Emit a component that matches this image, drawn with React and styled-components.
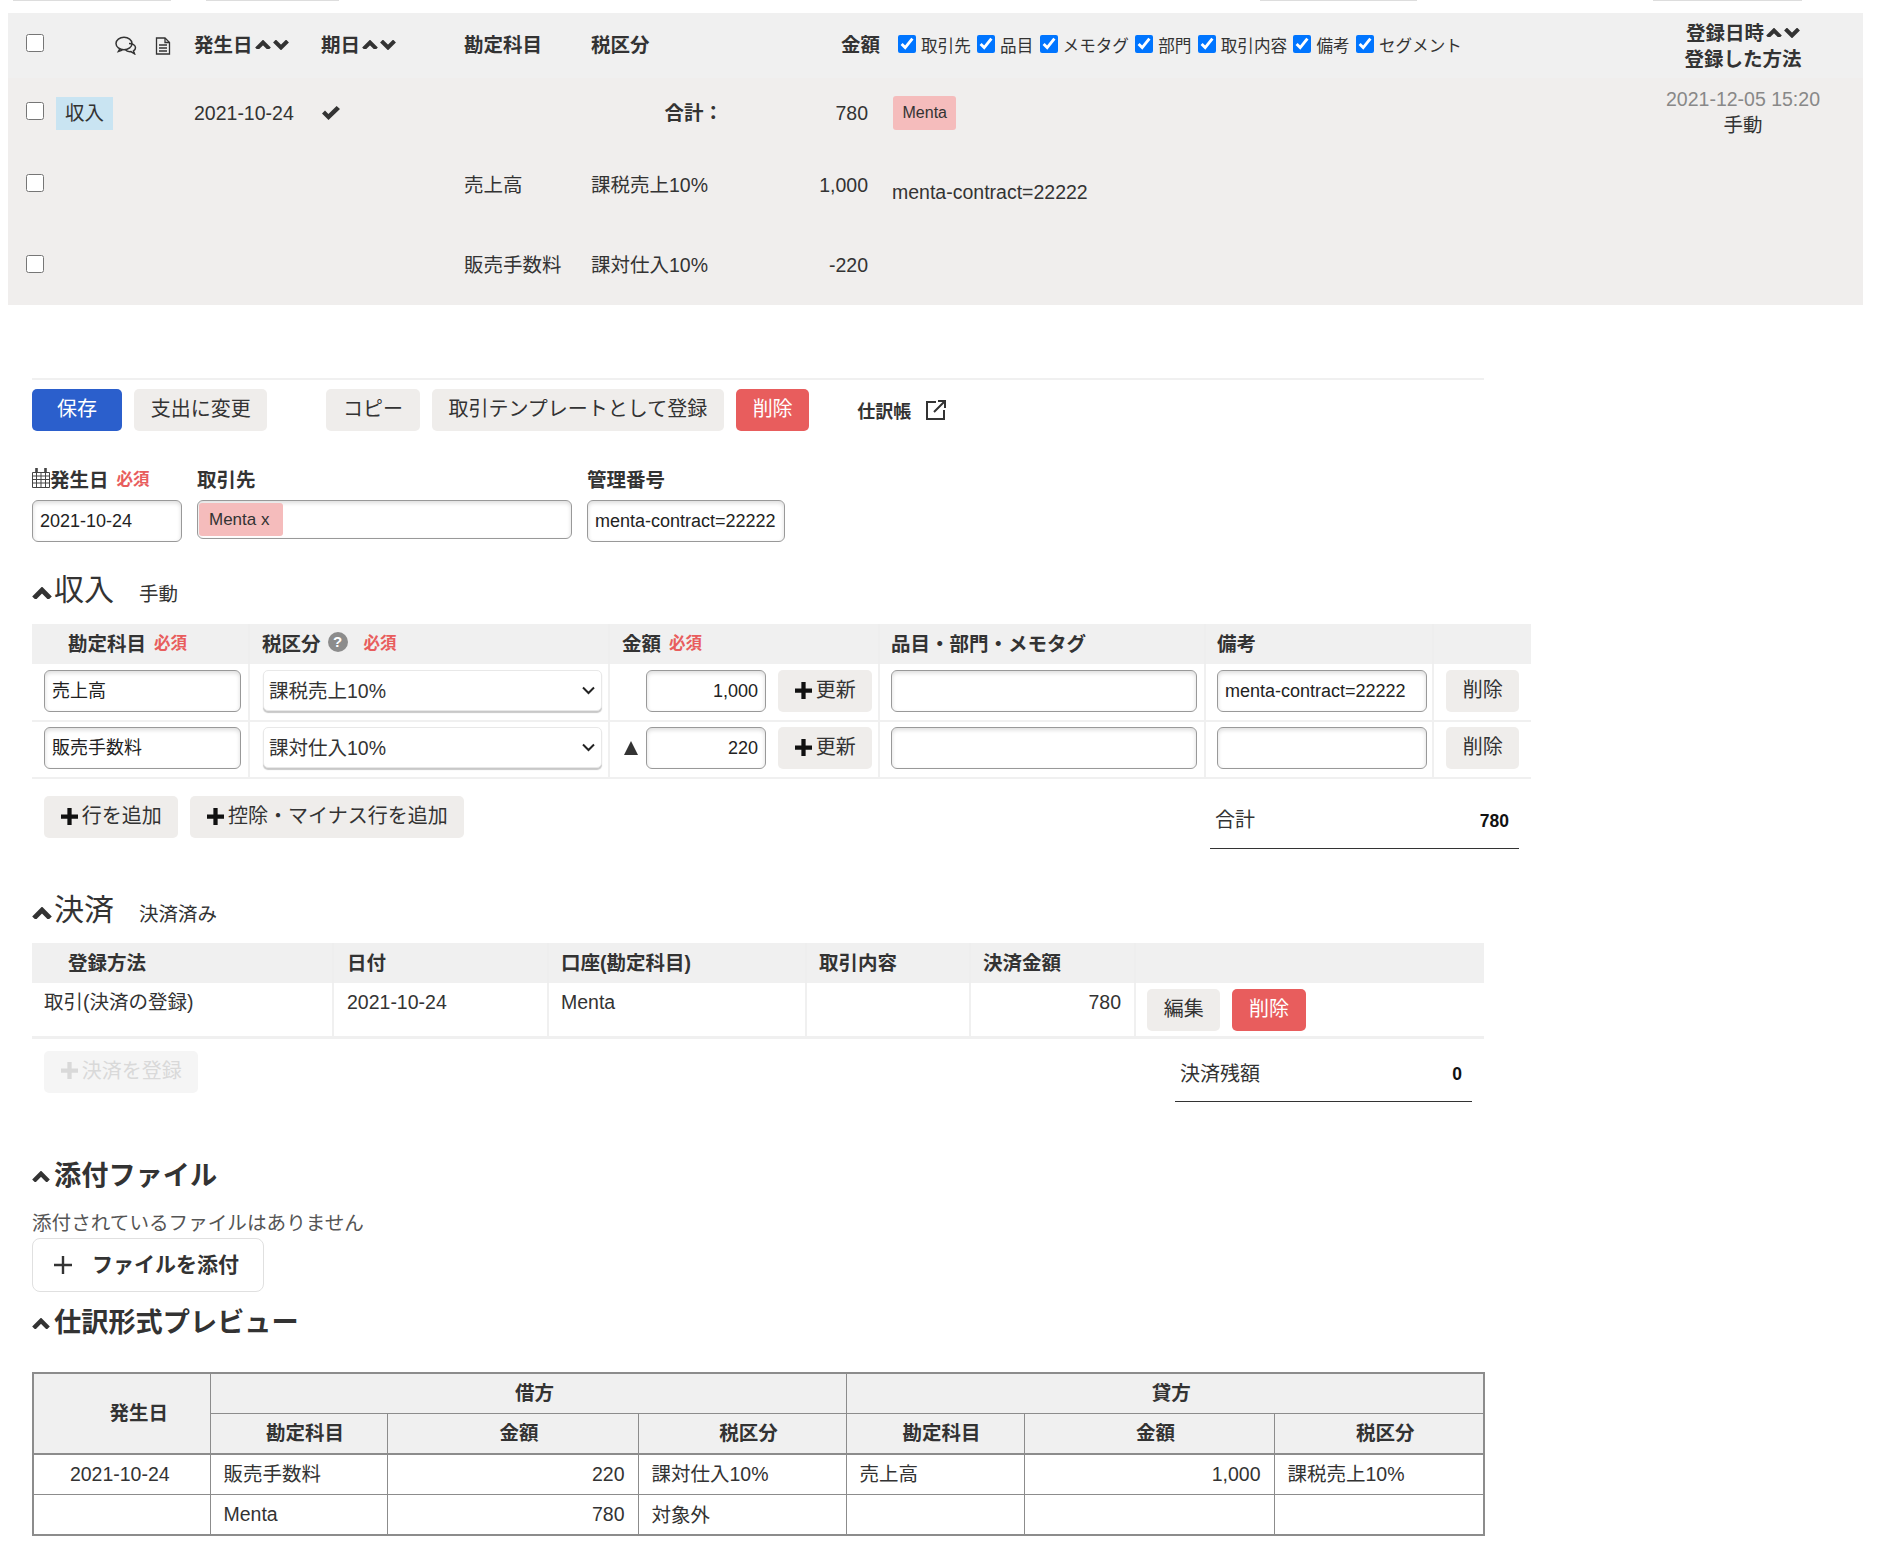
import React from "react";
import styled, { createGlobalStyle } from "styled-components";

const GlobalStyle = createGlobalStyle`
	html, body { margin: 0; background: #fff; }
	body {
		font-family: "Liberation Sans", "Noto Sans CJK JP", sans-serif;
		font-size: 19.5px;
		color: #333;
	}
	table { border-collapse: collapse; table-layout: fixed; }
	th, td { padding: 0; font-weight: normal; text-align: left; }
`;

const Page = styled.div`
	width: 1877px;
	height: 1559px;
	overflow: hidden;
`;

const Strip = styled.div`
	display: flex;
	height: 2px;
`;

const StripPiece = styled.span`
	display: block;
	height: 1px;
	width: ${(p) => p.$w}px;
	margin-left: ${(p) => p.$ml}px;
	background: #ddd;
`;

const TopTable = styled.table`
	width: 1855px;
	margin: 11px 0 0 8px;
	background: #f0eeed;
`;

const TopHead = styled.tr`
	height: 65px;
	background: #f0f0f0;
	th { vertical-align: middle; }
`;

const TopRow = styled.tr`
	height: ${(p) => p.$h}px;
	td { vertical-align: middle; line-height: 26px; }
`;

const Bold = styled.span`
	font-weight: bold;
`;

const HeadCell = styled.th`
	padding-left: ${(p) => p.$pl || 0}px;
	padding-right: ${(p) => p.$pr || 0}px;
	padding-bottom: ${(p) => p.$pb || 0}px;
	text-align: ${(p) => p.$align || "left"};
	font-weight: bold;
	line-height: 26px;
	white-space: nowrap;
`;

const SortLabel = styled.span`
	display: inline-flex;
	align-items: center;
	gap: 2px;
`;

const Cell = styled.td`
	padding-left: ${(p) => p.$pl || 0}px;
	padding-right: ${(p) => p.$pr || 0}px;
	padding-top: ${(p) => p.$pt || 0}px;
	padding-bottom: ${(p) => p.$pb || 0}px;
	text-align: ${(p) => p.$align || "left"};
	white-space: nowrap;
`;

const Check = styled.input.attrs({ type: "checkbox" })`
	display: block;
	flex: none;
	width: 18px;
	height: 18px;
	margin: 0;
`;

const TypeTag = styled.span`
	display: block;
	width: 57px;
	height: 33px;
	line-height: 32px;
	text-align: center;
	background: #c9e4f2;
`;

const IconPair = styled.span`
	display: flex;
	align-items: center;
	gap: 18px;
`;

const FilterRow = styled.div`
	display: flex;
	gap: 6.3px;
	font-weight: normal;
	font-size: 16.6px;
`;

const FilterItem = styled.label`
	display: flex;
	gap: 5px;
	align-items: flex-start;
	height: 30px;
	input { margin-top: 4px; }
	span { padding-top: 4px; line-height: 24px; }
`;

const Tag = styled.span`
	display: inline-block;
	padding: 0 9.5px;
	height: 34px;
	line-height: 34px;
	font-size: 16px;
	background: #f5bcbc;
	border-radius: 3px;
`;

const GrayDate = styled.div`
	color: #888;
`;

const ActionBar = styled.div`
	display: flex;
	align-items: center;
	width: 1452px;
	margin: 73px 0 0 32px;
	padding-top: 9px;
	border-top: 2px solid #f0f0f0;
	gap: 12px;
`;

const Button = styled.button`
	box-sizing: border-box;
	display: inline-flex;
	align-items: center;
	justify-content: center;
	gap: 4px;
	height: 42px;
	min-width: ${(p) => p.$min || 0}px;
	margin-left: ${(p) => p.$ml || 0}px;
	padding: 0 16.7px 5px;
	border: 0;
	border-radius: 5px;
	font: inherit;
	font-size: 20px;
	white-space: nowrap;
	color: ${(p) => (p.$kind === "primary" || p.$kind === "danger" ? "#fff" : p.$kind === "off" ? "#d9d9d9" : "#333")};
	background: ${(p) => (p.$kind === "primary" ? "#2b5fcc" : p.$kind === "danger" ? "#e85d5d" : p.$kind === "off" ? "#f5f5f5" : "#efedeb")};
	svg { margin-top: 3px; }
`;

const LedgerLink = styled.span`
	display: inline-flex;
	align-items: center;
	gap: 14px;
	margin-left: 36px;
	font-size: 18px;
	font-weight: bold;
`;

const FormRow = styled.div`
	display: grid;
	grid-template-columns: 150px 375px 198px;
	column-gap: 15px;
	margin: 36px 0 0 32px;
`;

const FieldLabel = styled.div`
	display: flex;
	align-items: center;
	height: 33px;
	padding-bottom: 11px;
	box-sizing: border-box;
	font-weight: bold;
`;

const Required = styled.span`
	color: #e85d5d;
	font-size: 16.5px;
	font-weight: bold;
	margin-left: ${(p) => p.$ml ?? 8}px;
`;

const TextInput = styled.input`
	box-sizing: border-box;
	display: block;
	width: ${(p) => p.$w || "100%"};
	height: 42px;
	padding: 0 7px ${(p) => (p.$cjk ? 4 : 0)}px;
	border: 1px solid #999;
	border-radius: 6px;
	box-shadow: inset 0 2px 4px rgba(0, 0, 0, 0.14);
	font: inherit;
	font-size: 18px;
	color: #222;
	background: #fff;
	text-align: ${(p) => p.$align || "left"};
`;

const PartnerBox = styled.div`
	box-sizing: border-box;
	height: 39px;
	padding: 2px 1px;
	border: 1px solid #999;
	border-radius: 6px;
	box-shadow: inset 0 2px 4px rgba(0, 0, 0, 0.14);
`;

const PartnerTag = styled.span`
	display: inline-block;
	width: 84px;
	height: 33px;
	line-height: 33px;
	padding-left: 10px;
	box-sizing: border-box;
	font-size: 17px;
	border-radius: 3px;
	background: #f5bcbc;
`;

const SectionHead = styled.div`
	display: flex;
	align-items: center;
	height: ${(p) => (p.$bold ? 40 : 44)}px;
	margin: ${(p) => p.$mt}px 0 ${(p) => p.$mb || 0}px 32px;
	font-size: ${(p) => (p.$bold ? 27.2 : 30)}px;
	font-weight: ${(p) => (p.$bold ? "bold" : "normal")};
	svg { margin-right: ${(p) => (p.$bold ? 4 : 2)}px; margin-top: 6px; }
`;

const SectionTitle = styled.span`
	padding-bottom: ${(p) => (p.$bold ? 2 : 6)}px;
`;

const SectionNote = styled.span`
	font-size: 19.5px;
	margin-left: 25px;
	margin-top: 5px;
`;

const FormTable = styled.table`
	width: ${(p) => p.$w}px;
	margin-left: 32px;
	th {
		height: 40px;
		background: #f0f0f0;
		font-weight: bold;
		border-right: 2px solid #eee;
		white-space: nowrap;
	}
	th:last-child { border-right: 0; }
`;

const HeadInner = styled.div`
	display: flex;
	align-items: center;
	padding-left: ${(p) => p.$pl}px;
	padding-bottom: 4px;
`;

const FormRowCells = styled.tr`
	td {
		height: 57px;
		box-sizing: border-box;
		vertical-align: top;
		padding-top: 6px;
		border-bottom: 2px solid #f0f0f0;
		border-right: 2px solid #f0f0f0;
	}
	td:last-child { border-right: 0; }
	& + & td { padding-top: 5px; }
`;

const InputCell = styled.div`
	box-sizing: border-box;
	padding-left: ${(p) => p.$pl}px;
	width: ${(p) => p.$w}px;
`;

const SelectWrap = styled.div`
	position: relative;
	width: 339px;
	margin-left: 13px;
`;

const Select = styled.select`
	box-sizing: border-box;
	display: block;
	width: 100%;
	height: 41px;
	padding: 0 5px;
	appearance: none;
	border: 1px solid #e8e8e8;
	border-radius: 5px;
	box-shadow: 0 2px 1px #c8c8c8;
	background: #fff;
	font: inherit;
	color: #333;
`;

const SelectArrow = styled.svg`
	position: absolute;
	right: 7px;
	top: 16px;
`;

const AmountCell = styled.div`
	display: flex;
	align-items: center;
	padding-left: 14px;
	gap: 12px;
`;

const Triangle = styled.span`
	width: 14px;
	height: 14px;
	clip-path: polygon(50% 0, 100% 100%, 0 100%);
	background: ${(p) => (p.$hide ? "transparent" : "#333")};
	margin-right: -4px;
`;

const FootRow = styled.div`
	display: flex;
	justify-content: space-between;
	align-items: flex-start;
	box-sizing: border-box;
	width: ${(p) => p.$w}px;
	margin: ${(p) => p.$mt}px 0 0 32px;
	padding: 0 12px;
`;

const ButtonGroup = styled.div`
	display: flex;
	gap: 12px;
`;

const TotalBox = styled.div`
	box-sizing: border-box;
	display: flex;
	justify-content: space-between;
	align-items: center;
	width: ${(p) => p.$w}px;
	height: ${(p) => p.$h}px;
	padding: 0 10px 2px 5px;
	border-bottom: 1px solid #333;
	font-size: 20px;
	b { font-size: 17.5px; color: #111; }
`;

const TotalLabel = styled.span`
	padding-bottom: 5px;
`;

const PayRow = styled.tr`
	td {
		height: 54px;
		box-sizing: border-box;
		vertical-align: top;
		padding-top: 6px;
		border-bottom: 3px solid #f0f0f0;
		border-right: 2px solid #f0f0f0;
	}
	td:last-child { border-right: 0; }
`;

const PayText = styled.div`
	padding: 0 ${(p) => p.$pr || 0}px 0 ${(p) => p.$pl || 0}px;
	line-height: 26px;
	text-align: ${(p) => p.$align || "left"};
`;

const PayButtons = styled.div`
	display: flex;
	gap: 12px;
	padding-left: 11px;
`;

const AttachNote = styled.div`
	margin: 15px 0 0 32px;
	font-size: 19.6px;
	line-height: 28px;
	color: #555;
`;

const AttachButton = styled.div`
	box-sizing: border-box;
	display: flex;
	align-items: center;
	gap: 19px;
	width: 232px;
	height: 54px;
	margin: 1px 0 0 32px;
	padding-left: 20px;
	border: 1px solid #e0e0e0;
	border-radius: 8px;
	font-size: 21px;
	font-weight: bold;
	span { padding-bottom: 3px; }
`;

const PreviewTable = styled.table`
	width: 1451px;
	margin: 31px 0 0 32px;
	border: 2px solid #8c8c8c;
	th, td {
		border: 1px solid #8c8c8c;
		height: 40.7px;
		box-sizing: border-box;
	}
	th {
		padding-bottom: 3px;
		background: #f0f0f0;
		font-weight: bold;
		text-align: center;
		padding-left: 13px;
	}
	thead { border-bottom: 2px solid #8c8c8c; }
`;

const PreviewDateHead = styled.th`
	padding-left: 34px !important;
`;

const Divided = styled.col`
	width: ${(p) => p.$w}px;
`;

const PreviewCell = styled.td`
	padding-left: ${(p) => (p.$align ? 0 : 13)}px;
	padding-right: ${(p) => (p.$align === "right" ? 13 : p.$align === "center" ? 4 : 0)}px;
	padding-bottom: ${(p) => (p.$latin ? 0 : 3)}px;
	text-align: ${(p) => p.$align || "left"} !important;
`;

const Up = ({ w = 16, sw = 4 }) => (
	<svg width={w} height={w * 0.62} viewBox="0 0 16 10" fill="none" stroke="currentColor" strokeWidth={sw}>
		<path d="M1.5 9 8 2.5 14.5 9" />
	</svg>
);

const Down = () => (
	<svg width="16" height="10" viewBox="0 0 16 10" fill="none" stroke="currentColor" strokeWidth="4">
		<path d="M1.5 1 8 7.5 14.5 1" />
	</svg>
);

const Sort = ({ children }) => (
	<SortLabel>
		{children}
		<Up />
		<Down />
	</SortLabel>
);

const Plus = ({ color = "#111" }) => (
	<svg width="17" height="17" viewBox="0 0 16 16" fill={color}>
		<path d="M6 0h4v6h6v4h-6v6H6v-6H0V6h6z" />
	</svg>
);

const ThinPlus = () => (
	<svg width="20" height="20" viewBox="0 0 20 20" stroke="#333" strokeWidth="2.4">
		<path d="M10 1v18M1 10h18" />
	</svg>
);

const CommentIcon = () => (
	<svg width="22" height="19" viewBox="0 0 22 19" fill="none" stroke="#333" strokeWidth="1.5">
		<ellipse cx="9" cy="7.5" rx="8" ry="6.2" fill="#f0f0f0" />
		<path d="M14 7.5c3.5 0 6.5 1.8 6.5 4.2 0 1.3-.8 2.4-2 3.1l1 3-3.6-2.2c-2.4.2-4.6-.6-5.6-2" />
		<path d="M5 12.5l-1.6 3 4-1.4" />
	</svg>
);

const DocIcon = () => (
	<svg width="16" height="18" viewBox="0 0 16 18" fill="none" stroke="#333" strokeWidth="1.3">
		<path d="M1.5 1h8.5l4.5 4.5V17h-13z" />
		<path d="M10 1v4.5h4.5M4 8h8M4 11h8M4 14h8" />
	</svg>
);

const CheckMark = () => (
	<svg width="18" height="14" viewBox="0 0 18 14" fill="#333">
		<path d="M0 7.5 3 4.5l3.4 3.6L14.6 0 18 3 6.5 14z" />
	</svg>
);

const CalendarIcon = () => (
	<svg width="18" height="20" viewBox="0 0 18 20" fill="none" stroke="#444" strokeWidth="1">
		<path d="M.5 4.5h17v15H.5zM.5 8h17M.5 11.5h17M.5 15h17M4.5 4.5v15M9 4.5v15M13.5 4.5v15" />
		<path d="M4.5 0v5M13.5 0v5" strokeWidth="2.6" />
	</svg>
);

const ExternalIcon = () => (
	<svg width="22" height="22" viewBox="0 0 22 22" fill="none" stroke="#333" strokeWidth="2">
		<path d="M11 3H2v17h17v-9M13 2h7v7M20 2 9 13" />
	</svg>
);

const HelpIcon = styled.span`
	display: inline-block;
	width: 20px;
	height: 20px;
	margin-left: 7px;
	border-radius: 50%;
	background: #8c8c8c;
	color: #fff;
	font-size: 15px;
	line-height: 20px;
	text-align: center;
`;

const filters = ["取引先", "品目", "メモタグ", "部門", "取引内容", "備考", "セグメント"];

const lines = [
	{ account: "売上高", tax: "課税売上10%", amount: "1,000", memo: "menta-contract=22222" },
	{ account: "販売手数料", tax: "課対仕入10%", amount: "220", memo: "", minus: true },
];

export default function App() {
	return (
		<Page>
			<GlobalStyle />
			<Strip>
				<StripPiece $ml={13} $w={158} />
				<StripPiece $ml={35} $w={133} />
				<StripPiece $ml={921} $w={157} />
				<StripPiece $ml={236} $w={149} />
			</Strip>

			<TopTable>
				<colgroup>
					<Divided $w={48} />
					<Divided $w={59} />
					<Divided $w={71} />
					<Divided $w={127} />
					<Divided $w={144} />
					<Divided $w={127} />
					<Divided $w={176} />
					<Divided $w={128} />
					<Divided $w={752} />
					<Divided $w={223} />
				</colgroup>
				<thead>
					<TopHead>
						<HeadCell $pl={18} $pb={5}>
							<Check readOnly />
						</HeadCell>
						<HeadCell />
						<HeadCell>
							<IconPair>
								<CommentIcon />
								<DocIcon />
							</IconPair>
						</HeadCell>
						<HeadCell $pl={8} $pb={2}>
							<Sort>発生日</Sort>
						</HeadCell>
						<HeadCell $pl={8} $pb={2}>
							<Sort>期日</Sort>
						</HeadCell>
						<HeadCell $pl={7} $pb={2}>
							勘定科目
						</HeadCell>
						<HeadCell $pl={7} $pb={2}>
							税区分
						</HeadCell>
						<HeadCell $pr={8} $pb={2} $align="right">
							金額
						</HeadCell>
						<HeadCell $pl={10}>
							<FilterRow>
								{filters.map((f) => (
									<FilterItem key={f}>
										<Check defaultChecked />
										<span>{f}</span>
									</FilterItem>
								))}
							</FilterRow>
						</HeadCell>
						<HeadCell $pr={17} $align="center">
							<Sort>登録日時</Sort>
							<br />
							登録した方法
						</HeadCell>
					</TopHead>
				</thead>
				<tbody>
					<TopRow $h={70}>
						<Cell $pl={18} $pb={5}>
							<Check readOnly />
						</Cell>
						<Cell>
							<TypeTag>収入</TypeTag>
						</Cell>
						<Cell />
						<Cell $pl={8}>2021-10-24</Cell>
						<Cell $pl={9}>
							<CheckMark />
						</Cell>
						<Cell />
						<Cell $align="right" $pr={37}>
							<Bold>合計：</Bold>
						</Cell>
						<Cell $pr={20} $align="right">
							780
						</Cell>
						<Cell $pl={5}>
							<Tag>Menta</Tag>
						</Cell>
						<Cell $pr={17} $pb={3} $align="center">
							<GrayDate>2021-12-05 15:20</GrayDate>
							手動
						</Cell>
					</TopRow>
					<TopRow $h={75}>
						<Cell $pl={18} $pb={5}>
							<Check readOnly />
						</Cell>
						<Cell colSpan={4} />
						<Cell $pl={7} $pb={2}>
							売上高
						</Cell>
						<Cell $pl={7} $pb={2}>
							課税売上10%
						</Cell>
						<Cell $pr={20} $pb={2} $align="right">
							1,000
						</Cell>
						<Cell $pl={4} $pt={13}>
							menta-contract=22222
						</Cell>
						<Cell />
					</TopRow>
					<TopRow $h={82}>
						<Cell $pl={18}>
							<Check readOnly />
						</Cell>
						<Cell colSpan={4} />
						<Cell $pl={7} $pt={2}>
							販売手数料
						</Cell>
						<Cell $pl={7} $pt={2}>
							課対仕入10%
						</Cell>
						<Cell $pr={20} $pt={2} $align="right">
							-220
						</Cell>
						<Cell />
						<Cell />
					</TopRow>
				</tbody>
			</TopTable>

			<ActionBar>
				<Button $kind="primary" $min={90}>
					保存
				</Button>
				<Button>支出に変更</Button>
				<Button $ml={47}>コピー</Button>
				<Button>取引テンプレートとして登録</Button>
				<Button $kind="danger">削除</Button>
				<LedgerLink>
					仕訳帳
					<ExternalIcon />
				</LedgerLink>
			</ActionBar>

			<FormRow>
				<div>
					<FieldLabel>
						<CalendarIcon />
						発生日
						<Required>必須</Required>
					</FieldLabel>
					<TextInput readOnly defaultValue="2021-10-24" />
				</div>
				<div>
					<FieldLabel>取引先</FieldLabel>
					<PartnerBox>
						<PartnerTag>Menta x</PartnerTag>
					</PartnerBox>
				</div>
				<div>
					<FieldLabel>管理番号</FieldLabel>
					<TextInput readOnly defaultValue="menta-contract=22222" />
				</div>
			</FormRow>

			<SectionHead $mt={26} $mb={12}>
				<Up w={20} />
				<SectionTitle>収入</SectionTitle>
				<SectionNote>手動</SectionNote>
			</SectionHead>

			<FormTable $w={1499}>
				<colgroup>
					<Divided $w={217} />
					<Divided $w={360} />
					<Divided $w={270} />
					<Divided $w={326} />
					<Divided $w={228} />
					<Divided $w={98} />
				</colgroup>
				<thead>
					<tr>
						<th>
							<HeadInner $pl={36}>
								勘定科目
								<Required>必須</Required>
							</HeadInner>
						</th>
						<th>
							<HeadInner $pl={12}>
								税区分
								<HelpIcon>?</HelpIcon>
								<Required $ml={16}>必須</Required>
							</HeadInner>
						</th>
						<th>
							<HeadInner $pl={12}>
								金額
								<Required>必須</Required>
							</HeadInner>
						</th>
						<th>
							<HeadInner $pl={11}>品目・部門・メモタグ</HeadInner>
						</th>
						<th>
							<HeadInner $pl={11}>備考</HeadInner>
						</th>
						<th />
					</tr>
				</thead>
				<tbody>
					{lines.map((l) => (
						<FormRowCells key={l.account}>
							<td>
								<InputCell $pl={12} $w={209}>
									<TextInput readOnly $cjk defaultValue={l.account} />
								</InputCell>
							</td>
							<td>
								<SelectWrap>
									<Select defaultValue={l.tax}>
										<option>{l.tax}</option>
									</Select>
									<SelectArrow width="13" height="9" viewBox="0 0 13 9" fill="none" stroke="#222" strokeWidth="2">
										<path d="M1 1.5 6.5 7 12 1.5" />
									</SelectArrow>
								</SelectWrap>
							</td>
							<td>
								<AmountCell>
									<Triangle $hide={!l.minus} />
									<TextInput readOnly $w="120px" $align="right" defaultValue={l.amount} />
									<Button>
										<Plus />
										更新
									</Button>
								</AmountCell>
							</td>
							<td>
								<InputCell $pl={11} $w={317}>
									<TextInput readOnly />
								</InputCell>
							</td>
							<td>
								<InputCell $pl={11} $w={221}>
									<TextInput readOnly defaultValue={l.memo} />
								</InputCell>
							</td>
							<td>
								<InputCell $pl={12} $w={86}>
									<Button>削除</Button>
								</InputCell>
							</td>
						</FormRowCells>
					))}
				</tbody>
			</FormTable>

			<FootRow $w={1499} $mt={17}>
				<ButtonGroup>
					<Button>
						<Plus />
						行を追加
					</Button>
					<Button>
						<Plus />
						控除・マイナス行を追加
					</Button>
				</ButtonGroup>
				<TotalBox $w={309} $h={53}>
					<TotalLabel>合計</TotalLabel>
					<b>780</b>
				</TotalBox>
			</FootRow>

			<SectionHead $mt={39} $mb={11}>
				<Up w={20} />
				<SectionTitle>決済</SectionTitle>
				<SectionNote>決済済み</SectionNote>
			</SectionHead>

			<FormTable $w={1452}>
				<colgroup>
					<Divided $w={301} />
					<Divided $w={215} />
					<Divided $w={258} />
					<Divided $w={164} />
					<Divided $w={165} />
					<Divided $w={349} />
				</colgroup>
				<thead>
					<tr>
						<th>
							<HeadInner $pl={36}>登録方法</HeadInner>
						</th>
						<th>
							<HeadInner $pl={13}>日付</HeadInner>
						</th>
						<th>
							<HeadInner $pl={12}>口座(勘定科目)</HeadInner>
						</th>
						<th>
							<HeadInner $pl={12}>取引内容</HeadInner>
						</th>
						<th>
							<HeadInner $pl={12}>決済金額</HeadInner>
						</th>
						<th />
					</tr>
				</thead>
				<tbody>
					<PayRow>
						<td>
							<PayText $pl={12}>取引(決済の登録)</PayText>
						</td>
						<td>
							<PayText $pl={13}>2021-10-24</PayText>
						</td>
						<td>
							<PayText $pl={12}>Menta</PayText>
						</td>
						<td />
						<td>
							<PayText $pr={13} $align="right">
								780
							</PayText>
						</td>
						<td>
							<PayButtons>
								<Button>編集</Button>
								<Button $kind="danger">削除</Button>
							</PayButtons>
						</td>
					</PayRow>
				</tbody>
			</FormTable>

			<FootRow $w={1452} $mt={12}>
				<Button $kind="off">
					<Plus color="#d9d9d9" />
					決済を登録
				</Button>
				<TotalBox $w={297} $h={51}>
					<TotalLabel>決済残額</TotalLabel>
					<b>0</b>
				</TotalBox>
			</FootRow>

			<SectionHead $bold $mt={52}>
				<Up w={18} />
				<SectionTitle $bold>添付ファイル</SectionTitle>
			</SectionHead>
			<AttachNote>添付されているファイルはありません</AttachNote>
			<AttachButton>
				<ThinPlus />
				<span>ファイルを添付</span>
			</AttachButton>
			<SectionHead $bold $mt={9}>
				<Up w={18} />
				<SectionTitle $bold>仕訳形式プレビュー</SectionTitle>
			</SectionHead>

			<PreviewTable>
				<colgroup>
					<Divided $w={177} />
					<Divided $w={177} />
					<Divided $w={251} />
					<Divided $w={208} />
					<Divided $w={178} />
					<Divided $w={250} />
					<Divided $w={210} />
				</colgroup>
				<thead>
					<tr>
						<PreviewDateHead rowSpan={2}>発生日</PreviewDateHead>
						<th colSpan={3}>借方</th>
						<th colSpan={3}>貸方</th>
					</tr>
					<tr>
						<th>勘定科目</th>
						<th>金額</th>
						<th>税区分</th>
						<th>勘定科目</th>
						<th>金額</th>
						<th>税区分</th>
					</tr>
				</thead>
				<tbody>
					<tr>
						<PreviewCell $align="center" $latin>
							2021-10-24
						</PreviewCell>
						<PreviewCell>販売手数料</PreviewCell>
						<PreviewCell $align="right" $latin>
							220
						</PreviewCell>
						<PreviewCell>課対仕入10%</PreviewCell>
						<PreviewCell>売上高</PreviewCell>
						<PreviewCell $align="right" $latin>
							1,000
						</PreviewCell>
						<PreviewCell>課税売上10%</PreviewCell>
					</tr>
					<tr>
						<PreviewCell />
						<PreviewCell $latin>Menta</PreviewCell>
						<PreviewCell $align="right" $latin>
							780
						</PreviewCell>
						<PreviewCell>対象外</PreviewCell>
						<PreviewCell />
						<PreviewCell />
						<PreviewCell />
					</tr>
				</tbody>
			</PreviewTable>
		</Page>
	);
}
